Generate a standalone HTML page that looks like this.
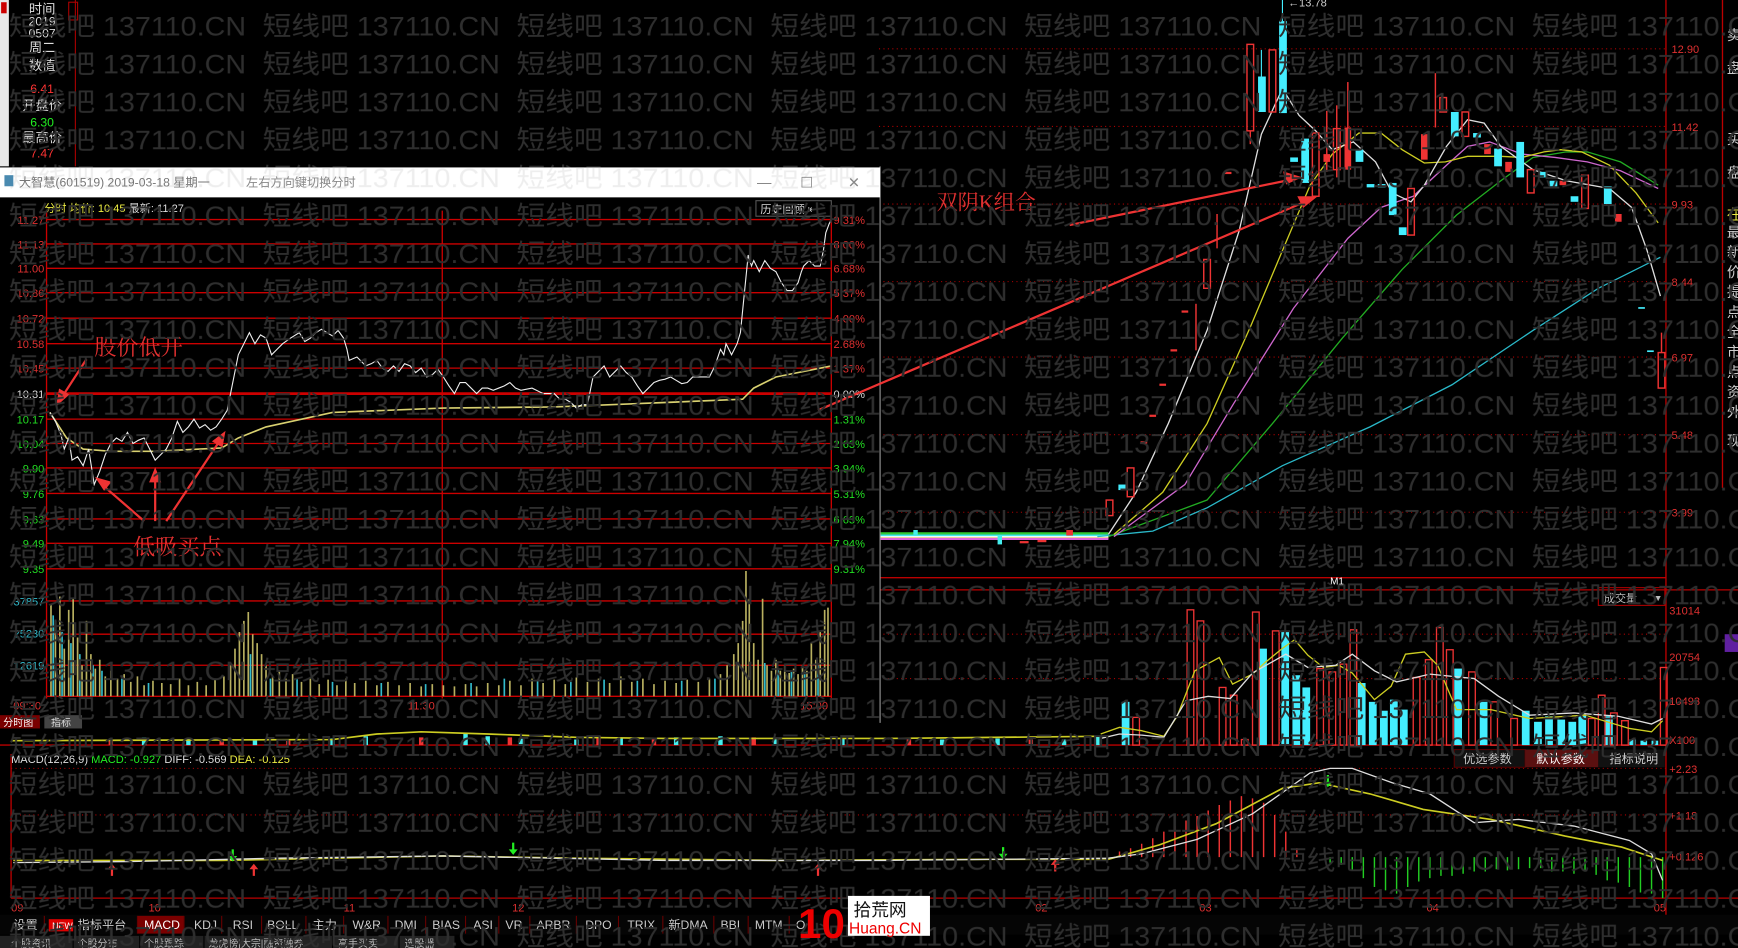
<!DOCTYPE html>
<html><head><meta charset="utf-8"><style>
html,body{margin:0;padding:0;background:#000;width:1738px;height:948px;overflow:hidden}
svg{display:block}
text{font-family:"Liberation Sans","Noto Sans CJK SC",sans-serif}
.s{font-family:"Liberation Serif","Noto Serif CJK SC",serif}
</style></head><body>
<svg width="1738" height="948" viewBox="0 0 1568 855" preserveAspectRatio="none" xmlns="http://www.w3.org/2000/svg">
<defs>
<pattern id="wm" patternUnits="userSpaceOnUse" x="8" y="5" width="229" height="34.2">
<text x="0" y="27" font-size="24" fill="#2e2e2e" textLength="214" lengthAdjust="spacingAndGlyphs">短线吧 137110.CN</text>
</pattern>
</defs>
<rect width="1568" height="855" fill="#000"/>

<!-- left sidebar -->
<rect x="0" y="0" width="8" height="150" fill="#e8e8e8"/>
<rect x="1" y="2" width="5" height="10" fill="#c00"/>
<line x1="68" y1="0" x2="68" y2="150" stroke="#a00" stroke-width="1"/>
<rect x="62" y="2" width="8" height="16" fill="none" stroke="#a00"/>
<g font-size="12" fill="#ddd" text-anchor="middle">
<text x="38" y="12">时间</text>
<text x="38" y="23" font-size="11">2019</text>
<text x="38" y="34" font-size="11">0507</text>
<text x="38" y="47">周二</text>
<text x="38" y="63">数值</text>
<text x="38" y="84" fill="#f33" font-size="11">6.41</text>
<text x="38" y="99">开盘价</text>
<text x="38" y="114" fill="#2e2" font-size="11">6.30</text>
<text x="38" y="128">最高价</text>
<text x="38" y="142" fill="#f33" font-size="11">7.47</text>
</g>

<!-- right K chart grid -->
<g stroke="#a00" stroke-dasharray="1,3" stroke-width="1">
<line x1="793" y1="44" x2="1503" y2="44"/><line x1="793" y1="114" x2="1503" y2="114"/>
<line x1="793" y1="184" x2="1503" y2="184"/><line x1="793" y1="254" x2="1503" y2="254"/>
<line x1="793" y1="322" x2="1503" y2="322"/><line x1="793" y1="392" x2="1503" y2="392"/>
<line x1="793" y1="462" x2="1503" y2="462"/>
<line x1="793" y1="572" x2="1503" y2="572"/><line x1="793" y1="612" x2="1503" y2="612"/>
<line x1="10" y1="693" x2="1503" y2="693"/><line x1="10" y1="735" x2="1503" y2="735"/>
</g>
<g stroke="#b00" stroke-width="1.2">
<line x1="1503" y1="0" x2="1503" y2="840"/>
<line x1="793" y1="521" x2="1503" y2="521"/>
<line x1="793" y1="532" x2="1568" y2="532"/>
<line x1="0" y1="672" x2="1503" y2="672"/>
<line x1="10" y1="810" x2="1568" y2="810"/>
<line x1="0" y1="840" x2="1568" y2="840"/>
<line x1="10" y1="680" x2="10" y2="810"/>
<line x1="1554" y1="0" x2="1554" y2="440"/>
</g>
<g font-size="10" fill="#e03030">
<text x="1508" y="48">12.90</text><text x="1508" y="118">11.42</text><text x="1508" y="188">9.93</text>
<text x="1508" y="258">8.44</text><text x="1508" y="326">6.97</text><text x="1508" y="396">5.48</text>
<text x="1508" y="466">3.99</text>
<text x="1506" y="554">31014</text><text x="1506" y="596">20754</text><text x="1506" y="636">10493</text><text x="1506" y="671">X100</text>
<text x="1506" y="697">+2.23</text><text x="1506" y="739">+1.18</text><text x="1506" y="776">+0.126</text>
<text x="1162" y="6" fill="#ccc">←13.78</text>
<text x="1200" y="527" font-size="9" fill="#fff">M1</text>
</g>
<g font-size="13" fill="#ccc">
<text x="1558" y="36">卖</text><text x="1558" y="66">盘</text><text x="1558" y="130">买</text><text x="1558" y="160">盘</text>
<text x="1558" y="198" fill="#ee4">在</text><text x="1558" y="214">最</text><text x="1558" y="232">新</text><text x="1558" y="250">价</text><text x="1558" y="268">提</text><text x="1558" y="286">点</text><text x="1558" y="304">全</text><text x="1558" y="322">市</text><text x="1558" y="340">点</text><text x="1558" y="358">资</text><text x="1558" y="376">外</text><text x="1558" y="402">现</text>
</g>
<rect x="1556" y="572" width="12" height="16" fill="#6020a0"/>

<!-- flat early candles -->
<g stroke-width="2">
<line x1="793" y1="483" x2="1000" y2="483" stroke="#4ee"/>
<line x1="793" y1="485" x2="1000" y2="485" stroke="#ee4"/>
<line x1="793" y1="486" x2="1000" y2="486" stroke="#d6d"/>
<line x1="793" y1="481" x2="1000" y2="481" stroke="#3c3"/>
<line x1="793" y1="484" x2="1000" y2="484" stroke="#fff" stroke-width="1"/>
</g>
<g fill="#4ee"><rect x="900" y="483" width="4" height="8"/><rect x="824" y="478" width="4" height="4"/></g>
<g fill="#e33"><rect x="920" y="488" width="8" height="2"/><rect x="936" y="487" width="8" height="2"/><rect x="962" y="478" width="6" height="5"/></g>

<!-- MAs -->
<g fill="none" stroke-width="1.2">
<polyline stroke="#2ab8c8" points="990,484 1040,479 1089,458 1157,420 1236,385 1310,347 1383,298 1442,260 1498,232"/>
<polyline stroke="#2a2" points="1000,484 1089,451 1148,382 1211,305 1265,243 1314,194 1354,163 1383,142 1413,137 1432,137 1462,146 1496,167"/>
<polyline stroke="#c6c" points="1005,484 1069,437 1113,364 1167,278 1216,215 1246,187 1275,177 1305,149 1324,132 1344,128 1373,139 1403,142 1432,146 1462,154 1496,170"/>
<polyline stroke="#cc2" points="1005,482 1049,444 1089,382 1128,295 1157,226 1182,167 1202,139 1226,120 1246,120 1265,135 1285,147 1304,146 1324,141 1354,141 1373,142 1393,137 1408,135 1427,137 1452,149 1476,174 1496,201"/>
<polyline stroke="#ddd" points="1000,482 1025,444 1054,382 1089,298 1118,208 1138,121 1157,80 1172,104 1187,118 1202,135 1221,128 1241,146 1256,174 1273,182 1285,167 1305,132 1324,108 1339,111 1354,132 1383,153 1413,163 1452,170 1472,187 1486,226 1498,267"/>
</g>
<!-- candles -->
<g stroke="#e33" stroke-width="1.3" fill="none">
<rect x="1125" y="40" width="6" height="78"/><line x1="1128" y1="118" x2="1128" y2="130"/>
<rect x="1145" y="45" width="6" height="56"/>
<rect x="1184" y="120" width="6" height="57"/>
<rect x="1203" y="116" width="6" height="37"/><line x1="1206" y1="95" x2="1206" y2="160"/>
<rect x="1270" y="170" width="6" height="42"/>
<rect x="1299" y="88" width="6" height="13"/><line x1="1295" y1="66" x2="1295" y2="115"/>
<rect x="1319" y="101" width="6" height="22"/>
<rect x="1378" y="153" width="6" height="21"/>
<rect x="1427" y="158" width="6" height="30"/>
<rect x="1496" y="318" width="6" height="32"/><line x1="1499" y1="300" x2="1499" y2="318"/>
<rect x="1017" y="422" width="6" height="26"/>
<rect x="998" y="451" width="6" height="14"/>
<rect x="1086" y="234" width="6" height="26"/>
<line x1="1079" y1="274" x2="1079" y2="316"/><line x1="1098" y1="193" x2="1098" y2="224"/>
<line x1="1216" y1="74" x2="1216" y2="153"/><line x1="1197" y1="100" x2="1197" y2="155"/>
</g>
<g fill="#e33">
<rect x="1194" y="139" width="6" height="7"/><rect x="1213" y="115" width="6" height="38"/>
<rect x="1282" y="121" width="6" height="23"/><rect x="1339" y="130" width="6" height="9"/>
<rect x="1358" y="146" width="6" height="9"/><rect x="1407" y="163" width="6" height="4"/>
<rect x="1457" y="193" width="6" height="7"/><rect x="1105" y="155" width="6" height="2"/>
<rect x="1029" y="398" width="6" height="2"/><rect x="1037" y="374" width="6" height="2"/>
<rect x="1046" y="346" width="6" height="2"/><rect x="1056" y="315" width="6" height="2"/>
<rect x="1066" y="280" width="6" height="2"/>
</g>
<g fill="#4ef">
<rect x="1135" y="69" width="7" height="32"/><line x1="1138" y1="45" x2="1138" y2="69" stroke="#4ef"/>
<rect x="1154" y="19" width="7" height="83"/><line x1="1157" y1="0" x2="1157" y2="19" stroke="#4ef"/>
<rect x="1174" y="125" width="7" height="40"/><rect x="1164" y="142" width="7" height="4"/>
<rect x="1223" y="135" width="7" height="11"/><rect x="1233" y="166" width="7" height="3"/><rect x="1243" y="166" width="7" height="3"/>
<rect x="1253" y="165" width="7" height="29"/><rect x="1262" y="205" width="7" height="7"/>
<rect x="1309" y="101" width="7" height="22"/><rect x="1329" y="120" width="7" height="4"/>
<rect x="1348" y="134" width="7" height="16"/><rect x="1368" y="128" width="7" height="32"/>
<rect x="1388" y="155" width="7" height="5"/><rect x="1398" y="163" width="7" height="5"/>
<rect x="1417" y="177" width="7" height="5"/><rect x="1447" y="168" width="7" height="16"/>
<rect x="1009" y="437" width="7" height="5"/><rect x="1478" y="277" width="6" height="1.5"/><rect x="1486" y="316" width="6" height="1.5"/>
</g>

<!-- right volume -->
<g fill="#4ef">
<rect x="1012" y="633" width="7" height="39"/><rect x="1136" y="585" width="7" height="87"/><rect x="1156" y="570" width="7" height="102"/>
<rect x="1166" y="609" width="7" height="63"/><rect x="1175" y="620" width="7" height="52"/><rect x="1225" y="616" width="7" height="56"/>
<rect x="1235" y="633" width="7" height="39"/><rect x="1245" y="641" width="7" height="31"/><rect x="1254" y="631" width="7" height="41"/>
<rect x="1263" y="640" width="7" height="32"/><rect x="1312" y="603" width="7" height="69"/><rect x="1335" y="633" width="7" height="39"/>
<rect x="1373" y="641" width="7" height="31"/><rect x="1384" y="651" width="7" height="21"/><rect x="1394" y="646" width="7" height="26"/>
<rect x="1405" y="649" width="7" height="23"/><rect x="1415" y="651" width="7" height="21"/><rect x="1424" y="645" width="7" height="27"/>
<rect x="1448" y="646" width="7" height="26"/><rect x="1470" y="667" width="6" height="5"/><rect x="1480" y="668" width="6" height="4"/><rect x="1490" y="668" width="6" height="4"/>
</g>
<g fill="none" stroke="#e33" stroke-width="1.2">
<rect x="1022" y="647" width="6" height="25"/><rect x="1071" y="550" width="6" height="122"/><rect x="1080" y="560" width="6" height="112"/>
<rect x="1100" y="620" width="6" height="52"/><rect x="1110" y="627" width="6" height="45"/><rect x="1120" y="667" width="6" height="5"/>
<rect x="1130" y="552" width="6" height="120"/><rect x="1148" y="569" width="6" height="103"/><rect x="1188" y="603" width="6" height="69"/>
<rect x="1199" y="606" width="6" height="66"/><rect x="1209" y="599" width="6" height="73"/><rect x="1218" y="568" width="6" height="104"/>
<rect x="1275" y="611" width="6" height="61"/><rect x="1286" y="595" width="6" height="77"/><rect x="1296" y="566" width="6" height="106"/>
<rect x="1305" y="586" width="6" height="86"/><rect x="1325" y="606" width="6" height="66"/><rect x="1345" y="633" width="6" height="39"/>
<rect x="1363" y="648" width="6" height="24"/><rect x="1433" y="648" width="6" height="24"/><rect x="1442" y="627" width="6" height="45"/>
<rect x="1453" y="643" width="6" height="29"/><rect x="1463" y="650" width="6" height="22"/><rect x="1498" y="602" width="6" height="70"/>
</g>
<g fill="none" stroke-width="1.2">
<polyline stroke="#cc2" points="993,662 1010,656 1030,659 1050,664 1062,646 1078,605 1100,593 1112,617 1130,608 1142,597 1158,584 1168,577 1180,591 1194,602 1208,600 1220,607 1240,631 1255,619 1268,590 1285,588 1297,600 1314,640 1345,640 1380,648 1430,645 1470,657 1490,660 1500,650"/>
<polyline stroke="#ddd" points="993,666 1010,662 1030,663 1050,665 1070,632 1090,628 1110,630 1130,607 1160,590 1180,602 1205,600 1220,590 1240,605 1260,615 1290,608 1330,612 1352,628 1380,645 1420,643 1460,646 1490,653 1500,648"/>
</g>
<rect x="1442" y="530" width="60" height="16" fill="none" stroke="#a00"/>
<text x="1447" y="543" font-size="10" fill="#bbb">成交量</text><text x="1492" y="542" font-size="8" fill="#bbb">▼</text>
<rect x="1312" y="676" width="64" height="16" fill="#111" stroke="#500"/><rect x="1376" y="676" width="66" height="16" fill="#5a1010"/><rect x="1442" y="676" width="60" height="16" fill="#111"/>
<g font-size="11" fill="#ccc"><text x="1320" y="688">优选参数</text><text x="1386" y="688" fill="#fff">默认参数</text><text x="1452" y="688">指标说明</text></g>

<!-- bottom strip volume (left/mid) -->
<g stroke-width="4">
<path stroke="#4ee" d="M130 672V665M170 672V666M230 672V667M300 672V666M330 672V664M420 672V662M440 672V664M470 672V666M520 672V667M560 672V666M610 672V665M650 672V664M700 672V667M760 672V666M850 672V667M900 672V666M960 672V667M990 672V664"/>
<path stroke="#e33" d="M100 672V668M200 672V667M260 672V668M380 672V665M460 672V665M540 672V664M590 672V666M680 672V665M820 672V666M930 672V667"/>
</g>
<polyline fill="none" stroke="#cc2" stroke-width="1.5" points="10,668 300,667 340,662 380,660 440,662 520,665 600,666 800,666 1000,664"/>
<text x="10" y="688" font-size="10" fill="#ddd">MACD(12,26,9) <tspan fill="#2e2">MACD: -0.927</tspan> DIFF: -0.569 <tspan fill="#ee4">DEA: -0.125</tspan></text>

<!-- MACD -->
<path stroke="#e33" stroke-width="1.3" d="M1010 773V768M1020 773V765M1030 773V761M1040 773V756M1050 773V750M1060 773V745M1070 773V740M1080 773V736M1090 773V731M1100 773V726M1110 773V722M1120 773V718M1130 773V720M1140 773V724M1150 773V735M1160 773V750M1170 773V765"/>
<path stroke="#2c2" stroke-width="1.3" d="M1200 773V778M1210 773V780M1220 773V785M1230 773V792M1240 773V800M1250 773V803M1260 773V806M1270 773V800M1280 773V795M1290 773V792M1300 773V790M1310 773V790M1320 773V788M1330 773V786M1340 773V786M1350 773V784M1360 773V785M1370 773V784M1380 773V783M1390 773V783M1400 773V786M1410 773V786M1420 773V788M1430 773V786M1440 773V789M1450 773V794M1460 773V796M1470 773V800M1480 773V805M1490 773V806M1500 773V810"/>
<polyline fill="none" stroke="#cc2" stroke-width="1.5" points="12,776 200,776 300,774 400,772 520,774 700,776 900,775 1000,775 1046,762 1097,743 1157,711 1190,706 1236,716 1284,730 1345,739 1412,754 1463,764 1500,776"/>
<polyline fill="none" stroke="#ddd" stroke-width="1.2" points="12,778 120,777 250,774 400,772 600,776 800,776 1000,774 1030,770 1080,757 1130,734 1182,697 1200,693 1220,693 1256,706 1290,716 1330,742 1370,739 1420,745 1470,758 1490,770 1500,794"/>
<g fill="#e33"><path d="M101 779l-4 5h3v6h2v-6h3z"/><path d="M229 779l-4 5h3v6h2v-6h3z"/><path d="M738 779l-4 5h3v6h2v-6h3z"/><path d="M952 775l-4 5h3v6h2v-6h3z"/></g>
<g fill="#2e2"><path d="M210 777l-4-5h3v-6h2v6h3z"/><path d="M463 771l-4-5h3v-6h2v6h3z"/><path d="M905 775l-4-5h3v-6h2v6h3z"/><path d="M1198 710l-4-5h3v-6h2v6h3z"/></g>
<g font-size="10" fill="#e03030"><text x="10" y="822">09</text><text x="134" y="822">10</text><text x="310" y="822">11</text><text x="462" y="822">12</text><text x="934" y="822">02</text><text x="1082" y="822">03</text><text x="1287" y="822">04</text><text x="1492" y="822">05</text></g>

<!-- toolbar -->
<rect x="0" y="825" width="1568" height="18" fill="#050505"/>
<rect x="44" y="829" width="22" height="11" fill="#d00"/>
<rect x="124" y="826" width="42" height="16" fill="#7a0000"/>
<g font-size="11" fill="#ccc">
<text x="12" y="838">设置</text><text x="47" y="838" font-size="8" fill="#fff">NEW</text><text x="70" y="838">指标平台</text>
<text x="130" y="838" fill="#fff">MACD</text><text x="175" y="838">KDJ</text><text x="210" y="838">RSI</text><text x="241" y="838">BOLL</text>
<text x="282" y="838">主力</text><text x="318" y="838">W&amp;R</text><text x="356" y="838">DMI</text><text x="390" y="838">BIAS</text>
<text x="427" y="838">ASI</text><text x="456" y="838">VR</text><text x="484" y="838">ARBR</text><text x="528" y="838">DPO</text>
<text x="566" y="838">TRIX</text><text x="603" y="838">新DMA</text><text x="650" y="838">BBI</text><text x="681" y="838">MTM</text><text x="718" y="838">O</text>
</g>
<g stroke="#600"><path d="M40 826V842M124 826V842M166 826V842M200 826V842M236 826V842M276 826V842M310 826V842M350 826V842M384 826V842M420 826V842M450 826V842M478 826V842M520 826V842M558 826V842M598 826V842M644 826V842M675 826V842M712 826V842"/></g>
<rect x="0" y="844" width="410" height="11" fill="#222"/>
<g font-size="9" fill="#bbb"><text x="10" y="854">个股资讯</text><text x="70" y="854">个股分布</text><text x="130" y="854">个股跟踪</text><text x="188" y="854">龙虎榜|大宗|融资融券</text><text x="305" y="854">高手买卖</text><text x="365" y="854">选股器</text></g>
<g stroke="#000"><path d="M66 844V855M126 844V855M184 844V855M300 844V855M360 844V855"/></g>

<!-- popup -->
<rect x="0" y="178" width="794" height="474" fill="#000"/>
<line x1="794" y1="150" x2="794" y2="652" stroke="#999"/>
<text x="40" y="191" font-size="10" fill="#ee4">分时 <tspan fill="#ee4">均价: 10.45</tspan> <tspan fill="#ddd">最新: 11.27</tspan></text>
<rect x="682" y="181" width="68" height="14" fill="none" stroke="#555"/>
<text x="686" y="192" font-size="10" fill="#ddd">历史回顾  ⇤</text>
<g stroke="#c00" stroke-width="1.2">
<line x1="42" y1="198" x2="750" y2="198"/><line x1="42" y1="220" x2="750" y2="220"/><line x1="42" y1="242" x2="750" y2="242"/>
<line x1="42" y1="264" x2="750" y2="264"/><line x1="42" y1="287" x2="750" y2="287"/><line x1="42" y1="310" x2="750" y2="310"/>
<line x1="42" y1="332" x2="750" y2="332"/><line x1="42" y1="355" x2="750" y2="355" stroke-width="2.5"/><line x1="42" y1="378" x2="750" y2="378"/>
<line x1="42" y1="400" x2="750" y2="400"/><line x1="42" y1="422" x2="750" y2="422"/><line x1="42" y1="445" x2="750" y2="445"/>
<line x1="42" y1="468" x2="750" y2="468"/><line x1="42" y1="490" x2="750" y2="490"/><line x1="42" y1="513" x2="750" y2="513"/>
<line x1="42" y1="542" x2="750" y2="542"/><line x1="42" y1="572" x2="750" y2="572"/><line x1="42" y1="600" x2="750" y2="600"/>
<line x1="42" y1="628" x2="750" y2="628"/>
<line x1="42" y1="190" x2="42" y2="630"/><line x1="399" y1="190" x2="399" y2="630"/><line x1="750" y1="190" x2="750" y2="630"/>
</g>
<g font-size="10" text-anchor="end">
<g fill="#e03030"><text x="40" y="202">11.27</text><text x="40" y="224">11.13</text><text x="40" y="246">11.00</text><text x="40" y="268">10.86</text><text x="40" y="291">10.72</text><text x="40" y="314">10.58</text><text x="40" y="336">10.45</text></g>
<text x="40" y="359" fill="#ddd">10.31</text>
<g fill="#2d2"><text x="40" y="382">10.17</text><text x="40" y="404">10.04</text><text x="40" y="426">9.90</text><text x="40" y="449">9.76</text><text x="40" y="472">9.63</text><text x="40" y="494">9.49</text><text x="40" y="517">9.35</text></g>
<g fill="#3bc"><text x="40" y="546">37857</text><text x="40" y="575">25230</text><text x="40" y="604">12619</text></g>
</g>
<g font-size="10">
<g fill="#e03030"><text x="752" y="202">9.31%</text><text x="752" y="224">8.00%</text><text x="752" y="246">6.68%</text><text x="752" y="268">5.37%</text><text x="752" y="291">4.00%</text><text x="752" y="314">2.68%</text><text x="752" y="336">1.37%</text></g>
<text x="752" y="359" fill="#ddd">0.00%</text>
<g fill="#2d2"><text x="752" y="382">1.31%</text><text x="752" y="404">2.63%</text><text x="752" y="426">3.94%</text><text x="752" y="449">5.31%</text><text x="752" y="472">6.63%</text><text x="752" y="494">7.94%</text><text x="752" y="517">9.31%</text></g>
<g fill="#e03030"><text x="12" y="640">09:30</text><text x="368" y="640">11:30</text><text x="722" y="640">15:00</text></g>
</g>
<!-- intraday volume -->
<path stroke="#b8b060" stroke-width="1.5" d="M46 628V545M50 628V560M54 628V538M58 628V585M62 628V550M66 628V540M70 628V575M74 628V600M78 628V560M82 628V590M86 628V603M90 628V595M95 628V610M100 628V605M106 628V612M112 628V608M118 628V615M124 628V610M130 628V618M138 628V614M146 628V616M154 628V617M162 628V612M170 628V618M178 628V615M186 628V618M194 628V612M202 628V610M208 628V600M212 628V585M216 628V570M220 628V560M224 628V552M228 628V572M232 628V580M236 628V590M240 628V600M246 628V610M252 628V605M258 628V612M264 628V608M272 628V615M280 628V612M288 628V617M296 628V613M304 628V618M312 628V612M320 628V616M330 628V614M340 628V618M350 628V615M360 628V618M370 628V616M380 628V619M390 628V617M400 628V618M410 628V619M420 628V617M430 628V619M440 628V616M450 628V618M460 628V614M470 628V618M480 628V612M490 628V616M500 628V613M510 628V617M520 628V611M530 628V615M540 628V612M550 628V616M560 628V610M570 628V615M580 628V612M590 628V617M600 628V614M610 628V616M620 628V613M630 628V615M640 628V612M650 628V608M656 628V600M662 628V590M666 628V580M670 628V560M673 628V515M676 628V540M680 628V580M684 628V595M688 628V540M692 628V600M696 628V605M700 628V595M704 628V605M708 628V600M712 628V607M716 628V603M720 628V608M724 628V600M728 628V605M732 628V580M736 628V595M740 628V570M744 628V550M747 628V548"/>
<path stroke="#3bc" stroke-width="1.5" d="M48 628V555M56 628V570M64 628V580M72 628V590M84 628V600M92 628V605M110 628V612M134 628V616M226 628V590M244 628V612M268 628V612M300 628V615M344 628V616M384 628V617M425 628V616M455 628V612M485 628V614M515 628V615M545 628V613M575 628V614M615 628V614M645 628V612M690 628V598M702 628V604M714 628V606M726 628V606M738 628V600"/>
<!-- avg line & price line -->
<polyline fill="none" stroke="#d8d070" stroke-width="1.5" points="45,372 60,395 75,405 100,407 140,407 200,404 215,395 240,385 300,372 400,368 500,367 600,363 670,360 680,350 700,340 750,330"/>
<polyline fill="none" stroke="#eee" stroke-width="1" points="45,372 50,380 55,392 58,405 62,395 65,415 70,412 75,420 80,405 85,437 90,425 95,410 100,400 105,395 110,398 115,390 120,400 125,397 130,395 135,405 140,415 145,410 150,405 155,395 160,380 165,390 170,385 175,378 180,386 185,383 190,388 195,385 200,378 205,370 210,345 215,320 220,310 225,300 230,310 235,302 240,305 245,320 250,315 255,310 262,305 270,300 275,308 280,305 285,300 290,297 295,300 300,303 305,298 310,305 313,315 315,325 322,322 330,330 335,328 340,325 345,332 350,335 355,330 360,335 365,328 370,330 375,336 380,332 385,340 390,338 395,333 400,340 405,348 410,355 415,345 420,345 425,350 430,355 435,350 440,350 445,352 450,350 455,348 460,345 465,350 470,352 480,350 490,355 495,355 500,355 505,360 510,360 515,363 520,368 525,365 530,365 533,350 535,340 540,335 545,330 550,340 555,335 560,330 565,336 570,340 575,348 580,355 585,350 590,345 595,343 600,342 605,340 610,343 615,346 620,345 625,340 630,340 640,340 645,330 650,315 653,320 655,310 660,320 665,310 668,300 670,280 672,260 675,230 678,240 680,235 685,245 690,235 695,242 700,245 705,255 710,262 715,262 720,255 723,245 725,240 730,235 735,240 740,240 743,225 745,210 748,202 750,198"/>
<!-- annotations -->
<g stroke="#e33" stroke-width="2" fill="#e33">
<line x1="78" y1="324" x2="56" y2="358"/><path d="M52 364l2-12 7 4z"/>
<line x1="130" y1="470" x2="92" y2="437"/><path d="M88 432l11 3-5 6z"/>
<line x1="140" y1="470" x2="140" y2="432"/><path d="M140 424l-4 10h8z"/>
<line x1="150" y1="470" x2="198" y2="398"/><path d="M202 391l-2 11-7-4z"/>
<line x1="965" y1="203" x2="1160" y2="163"/><path d="M1172 160l-13 -4 2 9z"/>
<line x1="738" y1="370" x2="1175" y2="183"/><path d="M1186 178l-14 0 4 8z"/>
</g>
<g class="s" fill="#e03030">
<text x="85" y="320" font-size="20" class="s">股价低开</text>
<text x="120" y="500" font-size="20" class="s">低吸买点</text>
<text x="845" y="189" font-size="19" class="s">双阴K组合</text>
</g>
<!-- bottom tabs of popup -->
<rect x="0" y="645" width="36" height="12" fill="#7a0000"/><rect x="40" y="645" width="34" height="12" fill="#444"/>
<text x="3" y="655" font-size="9" fill="#fff">分时图</text><text x="46" y="655" font-size="9" fill="#ddd">指标</text>

<!-- watermark -->
<rect x="0" y="0" width="1568" height="855" fill="url(#wm)"/>

<!-- popup title bar (over watermark) -->
<rect x="0" y="151" width="794" height="27" fill="#fff"/>
<rect x="0" y="151" width="794" height="27" fill="url(#wm)" opacity="0.08"/>
<rect x="4" y="158" width="8" height="10" fill="#4a8ab0"/>
<text x="17" y="168" font-size="11" fill="#777">大智慧(601519) 2019-03-18 星期一</text>
<text x="222" y="168" font-size="11" fill="#888">左右方向键切换分时</text>
<g font-size="13" fill="#888"><text x="683" y="169">—</text><text x="722" y="169">☐</text><text x="765" y="169">✕</text></g>

<!-- logo -->
<text x="720" y="846" font-size="38" font-weight="bold" fill="#e00" font-family="Liberation Sans,sans-serif">10</text>
<rect x="765" y="808" width="74" height="36" fill="#fff"/>
<text x="770" y="826" font-size="16" fill="#111">拾荒网</text>
<text x="766" y="842" font-size="14" fill="#e00">Huang.CN</text>
</svg>
</body></html>
